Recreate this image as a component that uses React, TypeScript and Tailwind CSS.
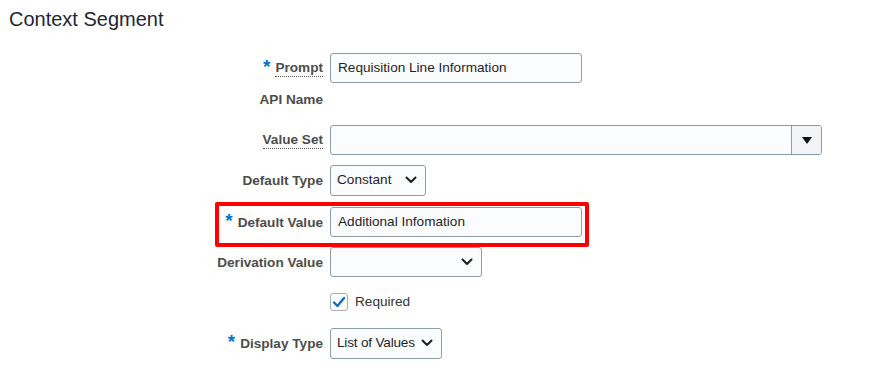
import React from "react";

const font = { fontFamily: '"Liberation Sans", Arial, sans-serif' };

function Chevron() {
  return (
    <svg width="12" height="8" viewBox="0 0 12 8" className="shrink-0">
      <polyline points="1.5,1.5 6,6 10.5,1.5" fill="none" stroke="#1f1f1f" strokeWidth="2" strokeLinecap="round" strokeLinejoin="round" />
    </svg>
  );
}

function Star() {
  return (
    <span className="mr-[5px] h-[17px] flex items-start">
      <span className="text-[19px] leading-[14px] font-bold text-[#0572ce]">*</span>
    </span>
  );
}

function Label({ text, req, dotted }: { text: string; req?: boolean; dotted?: boolean }) {
  return (
    <div className="w-[323px] shrink-0 flex items-center justify-end">
      {req && <Star />}
      <span
        className={
          "text-[13.6px] font-bold text-[#4c4c4c] leading-[17px] whitespace-nowrap " +
          (dotted ? "border-b border-dotted border-[#555]" : "")
        }
      >
        {text}
      </span>
    </div>
  );
}

const inputCls =
  "h-[30px] rounded-[3px] border border-[#8e9ca8] bg-[#fbfcfd] flex items-center text-[13.6px] text-[#1f1f1f] whitespace-nowrap";

function Row({ children, mt }: { children: React.ReactNode; mt: string }) {
  return <div className={"flex items-center h-[30px] " + mt}>{children}</div>;
}

export default function App() {
  return (
    <div className="relative w-[892px] h-[375px] bg-white overflow-hidden" style={font}>
      <div className="pl-[9px] pt-[8px] text-[20px] leading-[23px] text-[#1d2733]">Context Segment</div>

      <div className="flex flex-col mt-[22px]">
        <Row mt="mt-0">
          <Label text="Prompt" req dotted />
          <div className="w-[7px]" />
          <div className={inputCls + " w-[252px] pl-[7px] pt-px"}>Requisition Line Information</div>
        </Row>
        <Row mt="mt-px">
          <Label text="API Name" />
        </Row>
        <Row mt="mt-[11px]">
          <Label text="Value Set" dotted />
          <div className="w-[7px]" />
          <div className={inputCls + " w-[492px] overflow-hidden"}>
            <div className="flex-1" />
            <div className="w-[30px] h-full border-l border-[#8e9ca8] bg-[#f1f3f4] flex items-center justify-center">
              <svg width="10" height="7" viewBox="0 0 10 7">
                <polygon points="0,0 10,0 5,7" fill="#111" />
              </svg>
            </div>
          </div>
        </Row>
        <Row mt="mt-[10px]">
          <Label text="Default Type" />
          <div className="w-[7px]" />
          <div className={inputCls + " w-[96px] h-[31px] pl-[6px] pr-[8px] justify-between"}>
            <span>Constant</span>
            <Chevron />
          </div>
        </Row>
        <Row mt="mt-[12px]">
          <Label text="Default Value" req />
          <div className="w-[7px]" />
          <div className={inputCls + " w-[252px] pl-[7px] pt-px"}>Additional Infomation</div>
        </Row>
        <Row mt="mt-[10px]">
          <Label text="Derivation Value" />
          <div className="w-[7px]" />
          <div className={inputCls + " w-[152px] pr-[8px] justify-end"}>
            <Chevron />
          </div>
        </Row>
        <Row mt="mt-[10px]">
          <div className="w-[330px] shrink-0" />
          <div className="w-[18px] h-[18px] rounded-[3px] border border-[#a5adb5] bg-white flex items-center justify-center">
            <svg width="14" height="12" viewBox="0 0 14 12">
              <polyline points="2,6.5 5.5,10 12,2" fill="none" stroke="#0f6dc6" strokeWidth="2.4" strokeLinecap="round" strokeLinejoin="round" />
            </svg>
          </div>
          <span className="ml-[7px] text-[13.6px] text-[#333]">Required</span>
        </Row>
        <Row mt="mt-[11px]">
          <Label text="Display Type" req />
          <div className="w-[7px]" />
          <div className={inputCls + " w-[112px] h-[31px] pl-[6px] pr-[8px] justify-between"}>
            <span className="tracking-[-0.2px]">List of Values</span>
            <Chevron />
          </div>
        </Row>
      </div>

      <div className="absolute left-[215px] top-[202px] w-[374px] h-[45px] border-4 border-[#ff0000] rounded-[2px] pointer-events-none" />
    </div>
  );
}
